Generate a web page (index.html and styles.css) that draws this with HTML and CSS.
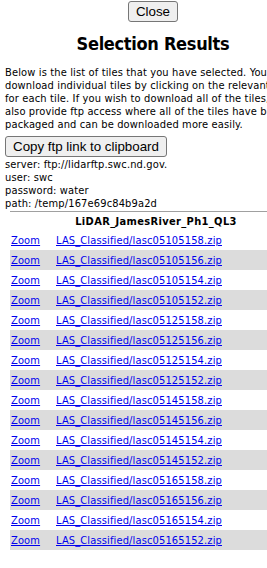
FILE: index.html
```html
<!DOCTYPE html>
<html>
<head>
<meta charset="utf-8">
<title>Selection Results</title>
<link rel="stylesheet" href="styles.css">
</head>
<body>
<div class="panel">
  <div class="close-row"><button class="btn">Close</button></div>
  <h2 class="title">Selection Results</h2>
  <p class="intro">Below is the list of tiles that you have selected. You can download individual tiles by clicking on the relevant link for each tile. If you wish to download all of the tiles, we also provide ftp access where all of the tiles have been packaged and can be downloaded more easily.</p>
  <button class="btn copy">Copy ftp link to clipboard</button>
  <div class="ftp">
    <div>server: ftp://lidarftp.swc.nd.gov.</div>
    <div>user: swc</div>
    <div>password: water</div>
    <div>path: /temp/167e69c84b9a2d</div>
  </div>
  <div class="results">
    <hr class="rule">
    <table class="tiles">
      <tr><th colspan="2">LiDAR_JamesRiver_Ph1_QL3</th></tr>
      <tr><td class="zc"><a href="#">Zoom</a></td><td><a href="#">LAS_Classified/lasc05105158.zip</a></td></tr>
      <tr class="alt"><td class="zc"><a href="#">Zoom</a></td><td><a href="#">LAS_Classified/lasc05105156.zip</a></td></tr>
      <tr><td class="zc"><a href="#">Zoom</a></td><td><a href="#">LAS_Classified/lasc05105154.zip</a></td></tr>
      <tr class="alt"><td class="zc"><a href="#">Zoom</a></td><td><a href="#">LAS_Classified/lasc05105152.zip</a></td></tr>
      <tr><td class="zc"><a href="#">Zoom</a></td><td><a href="#">LAS_Classified/lasc05125158.zip</a></td></tr>
      <tr class="alt"><td class="zc"><a href="#">Zoom</a></td><td><a href="#">LAS_Classified/lasc05125156.zip</a></td></tr>
      <tr><td class="zc"><a href="#">Zoom</a></td><td><a href="#">LAS_Classified/lasc05125154.zip</a></td></tr>
      <tr class="alt"><td class="zc"><a href="#">Zoom</a></td><td><a href="#">LAS_Classified/lasc05125152.zip</a></td></tr>
      <tr><td class="zc"><a href="#">Zoom</a></td><td><a href="#">LAS_Classified/lasc05145158.zip</a></td></tr>
      <tr class="alt"><td class="zc"><a href="#">Zoom</a></td><td><a href="#">LAS_Classified/lasc05145156.zip</a></td></tr>
      <tr><td class="zc"><a href="#">Zoom</a></td><td><a href="#">LAS_Classified/lasc05145154.zip</a></td></tr>
      <tr class="alt"><td class="zc"><a href="#">Zoom</a></td><td><a href="#">LAS_Classified/lasc05145152.zip</a></td></tr>
      <tr><td class="zc"><a href="#">Zoom</a></td><td><a href="#">LAS_Classified/lasc05165158.zip</a></td></tr>
      <tr class="alt"><td class="zc"><a href="#">Zoom</a></td><td><a href="#">LAS_Classified/lasc05165156.zip</a></td></tr>
      <tr><td class="zc"><a href="#">Zoom</a></td><td><a href="#">LAS_Classified/lasc05165154.zip</a></td></tr>
      <tr class="alt"><td class="zc"><a href="#">Zoom</a></td><td><a href="#">LAS_Classified/lasc05165152.zip</a></td></tr>
    </table>
  </div>
</div>
</body>
</html>
```
FILE: styles.css
```css
html, body {
  margin: 0;
  padding: 0;
  background: #ffffff;
}
body {
  font-family: "DejaVu Sans Condensed", "DejaVu Sans", Verdana, sans-serif;
  font-stretch: condensed;
  font-size: 11px;
  line-height: 13px;
  letter-spacing: 0.14px;
  color: #000000;
}
.panel {
  width: 296px;
  padding: 0 0 0 5px;
}
.close-row {
  text-align: center;
  padding-top: 1px;
}
.btn {
  font-family: "Liberation Sans", Arial, sans-serif;
  font-stretch: normal;
  letter-spacing: 0;
  font-size: 13.33px;
  line-height: 15px;
  padding: 2px 7px;
  margin: 0;
  background: #efefef;
  color: #000;
  border: 1px solid #767676;
  border-radius: 3px;
}
.title {
  text-align: center;
  font-size: 18px;
  line-height: 21px;
  font-weight: bold;
  letter-spacing: -0.3px;
  margin: 11px 0 12px 0;
}
.intro {
  margin: 0 0 5px 0;
}
.copy {
  display: block;
}
.ftp {
  margin: 1px 0 0 0;
}
.results {
  margin-left: 5px;
}
.rule {
  border: 0;
  border-top: 1px solid #a0a0a0;
  margin: 1px 0 0 0;
  height: 0;
}
.tiles {
  width: 292px;
  border-collapse: collapse;
}
.tiles th {
  font-weight: bold;
  text-align: center;
  letter-spacing: 0.35px;
  height: 18px;
  padding: 0;
}
.tiles td {
  height: 20px;
  padding: 0 1px;
  text-align: left;
}
.tiles td.zc {
  width: 43px;
}
.tiles tr.alt td {
  background: #dcdcdc;
}
.tiles a {
  color: #0000ee;
}
```
